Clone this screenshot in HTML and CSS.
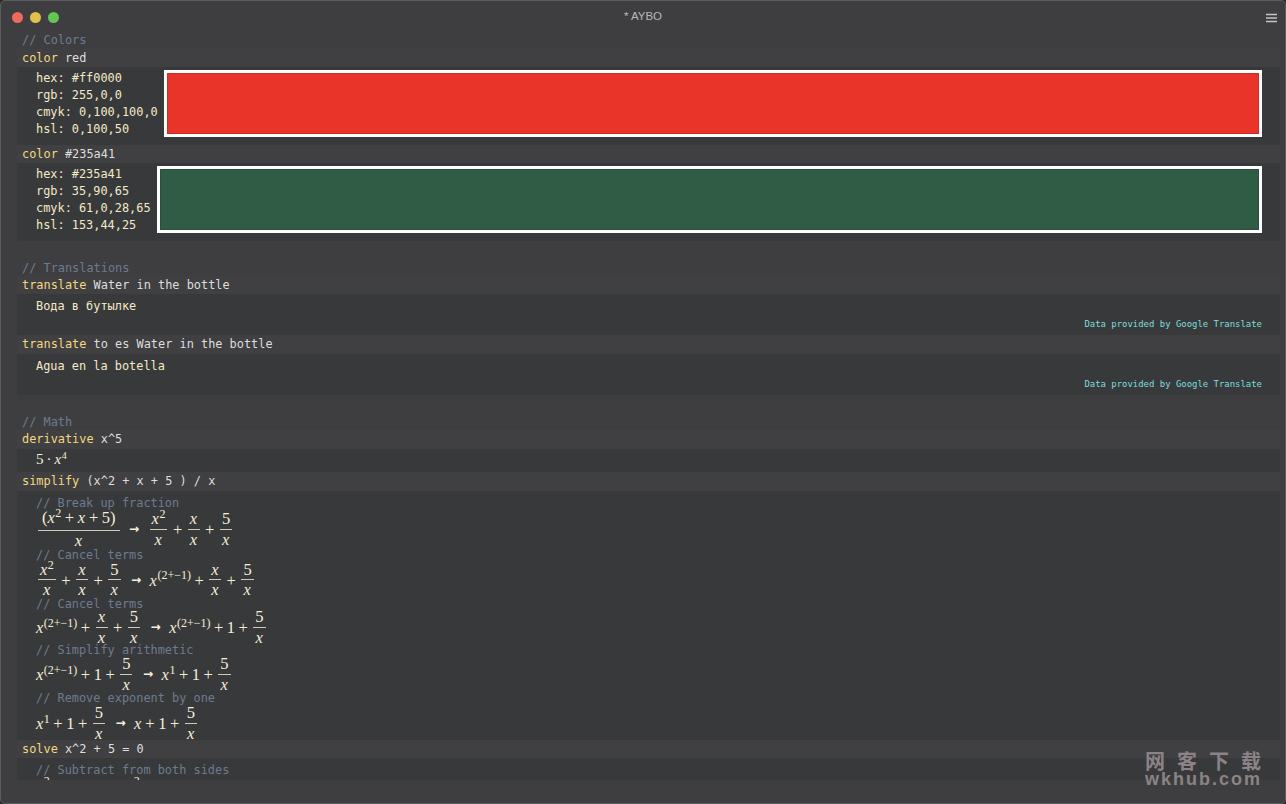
FILE: index.html
```html
<!DOCTYPE html>
<html lang="en">
<head>
<meta charset="utf-8">
<title>AYBO</title>
<link rel="stylesheet" href="styles.css">
</head>
<body>
<div class="window">
  <header class="titlebar">
    <div class="lights"><span class="light red"></span><span class="light yellow"></span><span class="light green"></span></div>
    <div class="title">* AYBO</div>
    <svg class="menu" width="11" height="10" viewBox="0 0 11 10"><path d="M0 1.5h11M0 5h11M0 8.500h11" stroke="#c4c4c4" stroke-width="1.600"/></svg>
  </header>
  <main class="sheet">
    <div class="comment">// Colors</div>
    <div class="row"><span class="kw">color</span> red</div>
    <div class="output colors">
      <div class="values">
        <div>hex: #ff0000</div><div>rgb: 255,0,0</div><div>cmyk: 0,100,100,0</div><div>hsl: 0,100,50</div>
      </div>
      <div class="swatch swatch-red"></div>
    </div>
    <div class="row"><span class="kw">color</span> #235a41</div>
    <div class="output colors">
      <div class="values">
        <div>hex: #235a41</div><div>rgb: 35,90,65</div><div>cmyk: 61,0,28,65</div><div>hsl: 153,44,25</div>
      </div>
      <div class="swatch swatch-green"></div>
    </div>

    <div class="comment section">// Translations</div>
    <div class="row"><span class="kw">translate</span> Water in the bottle</div>
    <div class="output translation">
      <div>Вода в бутылке</div>
      <div class="credit">Data provided by Google Translate</div>
    </div>
    <div class="row tall"><span class="kw">translate</span> to es Water in the bottle</div>
    <div class="output translation">
      <div>Agua en la botella</div>
      <div class="credit">Data provided by Google Translate</div>
    </div>

    <div class="comment section">// Math</div>
    <div class="row tall"><span class="kw">derivative</span> x^5</div>
    <div class="output single">
      <div class="math"><span>5</span><span class="dot">·</span><i>x</i><sup>4</sup></div>
    </div>
    <div class="row tall"><span class="kw">simplify</span> (x^2 + x + 5 ) / x</div>
    <div class="output steps">
      <div class="comment inner">// Break up fraction</div>
      <div class="math h35">
        <span class="frac wide"><span class="num">(<i>x</i><sup>2</sup><b>+</b><i>x</i><b>+</b>5)</span><span class="den"><i>x</i></span></span>
        <span class="arrow">→</span>
        <span class="frac"><span class="num"><i>x</i><sup>2</sup></span><span class="den"><i>x</i></span></span><b>+</b>
        <span class="frac"><span class="num"><i>x</i></span><span class="den"><i>x</i></span></span><b>+</b>
        <span class="frac"><span class="num">5</span><span class="den"><i>x</i></span></span>
      </div>
      <div class="comment inner">// Cancel terms</div>
      <div class="math h32">
        <span class="frac"><span class="num"><i>x</i><sup>2</sup></span><span class="den"><i>x</i></span></span><b>+</b>
        <span class="frac"><span class="num"><i>x</i></span><span class="den"><i>x</i></span></span><b>+</b>
        <span class="frac"><span class="num">5</span><span class="den"><i>x</i></span></span>
        <span class="arrow">→</span>
        <i>x</i><sup>(2+−1)</sup><b>+</b>
        <span class="frac"><span class="num"><i>x</i></span><span class="den"><i>x</i></span></span><b>+</b>
        <span class="frac"><span class="num">5</span><span class="den"><i>x</i></span></span>
      </div>
      <div class="comment inner">// Cancel terms</div>
      <div class="math h29">
        <i>x</i><sup>(2+−1)</sup><b>+</b>
        <span class="frac"><span class="num"><i>x</i></span><span class="den"><i>x</i></span></span><b>+</b>
        <span class="frac"><span class="num">5</span><span class="den"><i>x</i></span></span>
        <span class="arrow">→</span>
        <i>x</i><sup>(2+−1)</sup><b>+</b><span>1</span><b>+</b>
        <span class="frac"><span class="num">5</span><span class="den"><i>x</i></span></span>
      </div>
      <div class="comment inner">// Simplify arithmetic</div>
      <div class="math h31">
        <i>x</i><sup>(2+−1)</sup><b>+</b><span>1</span><b>+</b>
        <span class="frac"><span class="num">5</span><span class="den"><i>x</i></span></span>
        <span class="arrow">→</span>
        <i>x</i><sup>1</sup><b>+</b><span>1</span><b>+</b>
        <span class="frac"><span class="num">5</span><span class="den"><i>x</i></span></span>
      </div>
      <div class="comment inner">// Remove exponent by one</div>
      <div class="math h33">
        <i>x</i><sup>1</sup><b>+</b><span>1</span><b>+</b>
        <span class="frac"><span class="num">5</span><span class="den"><i>x</i></span></span>
        <span class="arrow">→</span>
        <i>x</i><b>+</b><span>1</span><b>+</b>
        <span class="frac"><span class="num">5</span><span class="den"><i>x</i></span></span>
      </div>
    </div>
    <div class="row"><span class="kw">solve</span> x^2 + 5 = 0</div>
    <div class="output steps">
      <div class="comment inner">// Subtract from both sides</div>
      <div class="math h14"><i>x</i><sup>2</sup><b>+</b><span>5</span><b>=</b><span>0</span><span class="arrow">→</span><i>x</i><sup>2</sup><b>=</b><span>−5</span></div>
    </div>
  </main>
  <div class="watermark">
    <div class="wm-cn">网客下载</div>
    <div class="wm-en">wkhub.com</div>
  </div>
</div>
</body>
</html>
```
FILE: styles.css
```css
* { box-sizing: border-box; }
html, body { margin: 0; height: 100%; background: #2c2c2e; overflow: hidden; }

.window {
  position: relative;
  width: 1286px;
  height: 804px;
  display: flex;
  flex-direction: column;
  background: #3e3e40;
  border: 1px solid #5c5c5e;
  border-radius: 5px;
  overflow: hidden;
  font-family: "DejaVu Sans Mono", monospace;
  font-size: 11.9px;
  color: #dddddd;
}

.titlebar {
  flex: none;
  height: 30px;
  display: flex;
  align-items: center;
  justify-content: center;
  position: relative;
}
.lights { position: absolute; left: 11px; top: 11px; display: flex; gap: 7px; }
.light { width: 11px; height: 11px; border-radius: 50%; }
.light.red { background: #ec6a5f; }
.light.yellow { background: #e3bf4b; }
.light.green { background: #62c554; }
.title { font-family: "Liberation Sans", sans-serif; font-size: 11.500px; color: #b9b9b9; }
.menu { position: absolute; right: 8px; top: 12px; }

.sheet {
  flex: none;
  height: 749px;
  overflow: hidden;
  padding: 0 5px 0 16px;
}

.comment { height: 18px; line-height: 18px; padding-left: 5px; color: #6e7b8f; }
.comment.section { margin-top: 18px; height: 17px; }
.comment.inner { height: 17px; line-height: 17px; padding-left: 0; }

.row { height: 18px; line-height: 18px; padding-left: 5px; background: #403f42; color: #dedede; }
.row.tall { height: 19px; line-height: 19px; }
.kw { color: #f2d97f; }

.output { background: #38393b; padding-left: 19px; color: #f4e9c6; line-height: 17px; }

.colors { display: flex; gap: 6px; height: 78px; padding: 3px 18px 8px 19px; }
.values { flex: none; white-space: nowrap; }
.swatch { flex: 1; border: 3.500px solid #ffffff; box-shadow: inset 0 0 0 1px rgba(0, 0, 0, 0.12); }
.swatch-red { background: #e9342a; }
.swatch-green { background: #305b45; }

.translation { height: 41px; padding-top: 4px; padding-right: 18px; }
.credit { margin-top: 1px; text-align: right; font-size: 8.950px; color: #7fdedb; }

.single { height: 23px; }
.steps { padding-top: 4px; }

.math {
  display: flex;
  align-items: center;
  font-family: "Liberation Serif", serif;
  font-size: 16.500px;
  color: #f6efd9;
  white-space: nowrap;
}
.single .math { height: 21px; font-size: 15px; }
.single .math sup { font-size: 10px; margin-bottom: 8px; }
.math.h35 { height: 35px; }
.math.h33 { height: 33px; }
.math.h32 { height: 32px; }
.math.h31 { height: 31px; }
.math.h29 { height: 29px; }
.math.h14 { height: 14px; }
.math i { font-style: italic; margin-right: 0.5px; }
.math b { font-weight: normal; margin: 0 3.500px; }
.math sup { font-size: 12px; line-height: 0; align-self: center; margin-bottom: 10px; }
.dot { margin: 0 3px; }
.arrow { font-family: "DejaVu Sans", sans-serif; font-size: 12px; font-weight: bold; margin: 0 8.500px; }

.frac { display: inline-flex; flex-direction: column; align-items: stretch; text-align: center; line-height: 1; margin: 0 2px; }
.frac .num { display: flex; justify-content: center; align-items: baseline; padding: 0 2px 1px; border-bottom: 1px solid #cfc9b6; }
.frac .den { padding-top: 2px; }
.frac .num sup { margin-bottom: 0; position: relative; top: -5px; }
.frac.wide .num { padding: 0 4px 3px; }
.frac.wide { margin-right: 1px; }

.watermark {
  position: absolute;
  left: 1144px;
  top: 749px;
  width: 120px;
  color: #8b8386;
  font-family: "Noto Sans CJK SC", "Liberation Sans", sans-serif;
}
.wm-cn { font-size: 20px; line-height: 22px; letter-spacing: 12px; white-space: nowrap; font-weight: 700; }
.wm-en { font-family: "Liberation Sans", sans-serif; font-size: 18px; font-weight: bold; line-height: 14px; letter-spacing: 2px; white-space: nowrap; }
```
